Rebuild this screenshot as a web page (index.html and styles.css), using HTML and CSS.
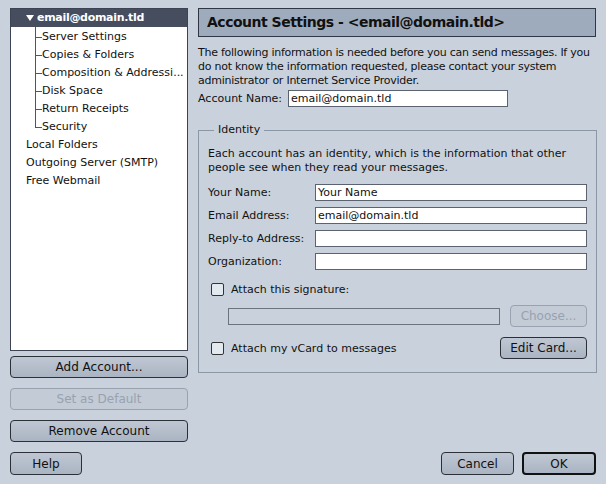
FILE: index.html
```html
<!DOCTYPE html>
<html>
<head>
<meta charset="utf-8">
<link rel="stylesheet" href="styles.css">
</head>
<body>
<div class="app">
  <div class="left">
    <div class="tree">
      <div class="row sel"><span class="tri"></span>email@domain.tld</div>
      <div class="children">
        <div class="row child">Server Settings</div>
        <div class="row child">Copies &amp; Folders</div>
        <div class="row child">Composition &amp; Addressi...</div>
        <div class="row child">Disk Space</div>
        <div class="row child">Return Receipts</div>
        <div class="row child last">Security</div>
      </div>
      <div class="row top">Local Folders</div>
      <div class="row top">Outgoing Server (SMTP)</div>
      <div class="row top">Free Webmail</div>
    </div>
    <div class="leftbtns">
      <button class="btn wide">Add Account...</button>
      <button class="btn wide" disabled>Set as Default</button>
      <button class="btn wide">Remove Account</button>
    </div>
  </div>
  <div class="right">
    <div class="header">Account Settings - &lt;email@domain.tld&gt;</div>
    <p class="desc">The following information is needed before you can send messages. If you do not know the information requested, please contact your system administrator or Internet Service Provider.</p>
    <div class="acct">
      <label class="acctlabel">Account Name:</label>
      <div class="field acctfield">email@domain.tld</div>
    </div>
    <fieldset class="identity">
      <legend>Identity</legend>
      <p class="idesc">Each account has an identity, which is the information that other people see when they read your messages.</p>
      <div class="form">
        <label>Your Name:</label><div class="field">Your Name</div>
        <label>Email Address:</label><div class="field">email@domain.tld</div>
        <label>Reply-to Address:</label><div class="field"></div>
        <label>Organization:</label><div class="field"></div>
      </div>
      <div class="check sig"><span class="box"></span>Attach this signature:</div>
      <div class="sigrow">
        <div class="field disabled"></div>
        <button class="btn choose" disabled>Choose...</button>
      </div>
      <div class="vrow">
        <div class="check"><span class="box"></span>Attach my vCard to messages</div>
        <button class="btn edit">Edit Card...</button>
      </div>
    </fieldset>
  </div>
  <div class="footer">
    <button class="btn help">Help</button>
    <div class="okc">
      <button class="btn cancel">Cancel</button>
      <button class="btn ok">OK</button>
    </div>
  </div>
</div>
</body>
</html>
```
FILE: styles.css
```css
html, body {
  margin: 0;
  padding: 0;
}
body {
  width: 606px;
  height: 484px;
  background: #c9d1dc;
  font-family: "DejaVu Sans", sans-serif;
  font-size: 11px;
  color: #111;
  overflow: hidden;
}
.app {
  box-sizing: border-box;
  height: 484px;
  padding: 8px 10px 0 10px;
  display: grid;
  grid-template-columns: 178px 398px;
  grid-template-rows: 436px 40px;
  column-gap: 10px;
}
.left {
  display: flex;
  flex-direction: column;
}
.tree {
  box-sizing: border-box;
  height: 343px;
  background: #fff;
  border: 1px solid #3c4352;
}
.row {
  height: 18px;
  line-height: 20px;
  white-space: nowrap;
}
.sel {
  background: #454d5e;
  color: #fff;
  font-weight: bold;
  padding-left: 15px;
  display: flex;
  align-items: center;
  line-height: 18px;
  letter-spacing: -0.3px;
}
.tri {
  width: 0;
  height: 0;
  border-left: 4px solid transparent;
  border-right: 4px solid transparent;
  border-top: 6px solid #fff;
  margin-right: 3px;
}
.child {
  padding-left: 31px;
  position: relative;
}
.child::before {
  content: "";
  position: absolute;
  left: 24px;
  top: 0;
  width: 6px;
  height: 10px;
  border-left: 1px solid #555;
  border-bottom: 1px solid #555;
}
.child:not(.last)::after {
  content: "";
  position: absolute;
  left: 24px;
  top: 10px;
  height: 8px;
  border-left: 1px solid #555;
}
.top {
  padding-left: 15px;
}
.leftbtns {
  display: flex;
  flex-direction: column;
  gap: 10px;
  margin-top: 5px;
}
.btn {
  box-sizing: border-box;
  height: 23px;
  font-family: "DejaVu Sans", sans-serif;
  font-size: 12px;
  color: #111;
  background: linear-gradient(#bfc7d3, #aab4c2);
  border: 1px solid #2b2f38;
  border-radius: 4px;
  padding: 0 8px;
}
.btn:disabled {
  color: #98a2ae;
  border-color: #98a2b0;
  background: #c3cbd6;
}
.wide {
  width: 178px;
}
.leftbtns .wide {
  height: 22px;
}
.right {
  display: flex;
  flex-direction: column;
}
.header {
  box-sizing: border-box;
  height: 29px;
  background: #9eabbc;
  border: 1px solid #2f3644;
  font-weight: bold;
  font-size: 14px;
  letter-spacing: -0.5px;
  line-height: 27px;
  padding-left: 8px;
  color: #111;
}
.desc {
  margin: 9px 0 0 0;
  line-height: 14px;
  letter-spacing: -0.25px;
}
.acct {
  display: flex;
  align-items: center;
  margin-top: 2px;
}
.acctlabel {
  width: 90px;
}
.field {
  box-sizing: border-box;
  height: 17px;
  background: #fff;
  border: 1px solid #5c6370;
  line-height: 15px;
  padding-left: 2px;
  font-size: 11px;
}
.acctfield {
  width: 220px;
}
.identity {
  margin: 16px 0 0 0;
  padding: 4px 9px 13px 9px;
  border: 1px solid #8c97a6;
  height: 250px;
  box-sizing: border-box;
}
.identity legend {
  padding: 0 4px;
  margin-left: 6px;
  line-height: 14px;
}
.idesc {
  margin: 6px 0 0 0;
  line-height: 14px;
}
.form {
  display: grid;
  grid-template-columns: 107px 1fr;
  row-gap: 6px;
  margin-top: 9px;
  align-items: center;
}
.check {
  display: flex;
  align-items: center;
  gap: 7px;
}
.box {
  box-sizing: border-box;
  width: 13px;
  height: 13px;
  background: #e2eaef;
  border: 1px solid #333;
  border-radius: 2px;
}
.sig {
  margin-top: 13px;
  margin-left: 3px;
}
.sigrow {
  display: flex;
  align-items: center;
  margin-top: 9px;
  margin-left: 20px;
  gap: 10px;
}
.field.disabled {
  width: 272px;
  background: #c9d1dc;
  border-color: #6b7380;
}
.choose {
  width: 77px;
  height: 22px;
}
.vrow {
  display: flex;
  justify-content: space-between;
  align-items: center;
  margin-top: 10px;
  margin-left: 3px;
}
.edit {
  width: 87px;
  height: 22px;
}
.footer {
  grid-column: 1 / 3;
  display: flex;
  justify-content: space-between;
  align-items: flex-start;
  padding-top: 8px;
}
.help {
  width: 72px;
}
.okc {
  display: flex;
  gap: 8px;
}
.cancel {
  width: 73px;
}
.ok {
  width: 74px;
  border-width: 2px;
  border-color: #111;
}
```
